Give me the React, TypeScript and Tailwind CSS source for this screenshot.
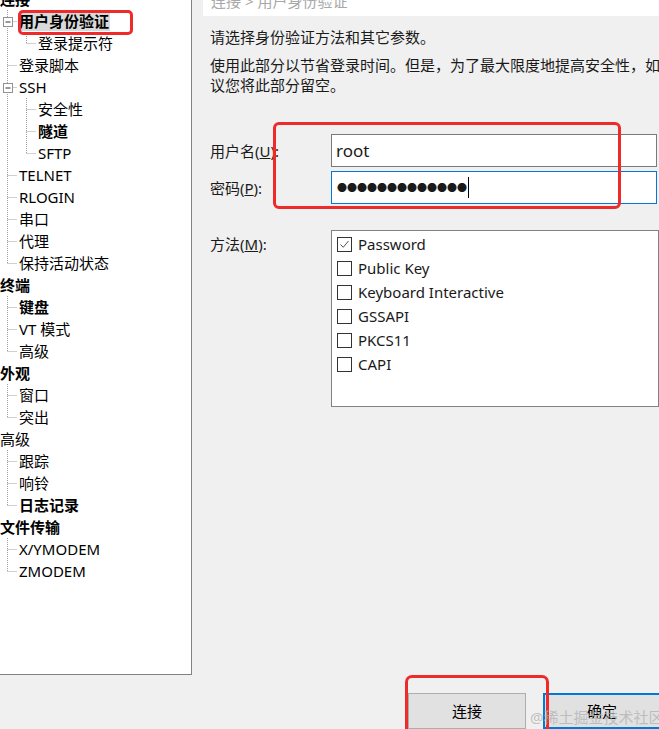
import React from 'react';

type Row = {
  label: string;
  level: 0 | 1 | 2;
  bold?: boolean;
  last?: boolean;
  box?: boolean;
  cont?: boolean;
  selected?: boolean;
};

const ROWS: Row[] = [
  { label: '连接', level: 0, bold: true },
  { label: '用户身份验证', level: 1, bold: true, box: true, selected: true },
  { label: '登录提示符', level: 2, last: true, cont: true },
  { label: '登录脚本', level: 1 },
  { label: 'SSH', level: 1, box: true },
  { label: '安全性', level: 2, cont: true },
  { label: '隧道', level: 2, bold: true, cont: true },
  { label: 'SFTP', level: 2, last: true, cont: true },
  { label: 'TELNET', level: 1 },
  { label: 'RLOGIN', level: 1 },
  { label: '串口', level: 1 },
  { label: '代理', level: 1 },
  { label: '保持活动状态', level: 1, last: true },
  { label: '终端', level: 0, bold: true },
  { label: '键盘', level: 1, bold: true },
  { label: 'VT 模式', level: 1 },
  { label: '高级', level: 1, last: true },
  { label: '外观', level: 0, bold: true },
  { label: '窗口', level: 1 },
  { label: '突出', level: 1, last: true },
  { label: '高级', level: 0 },
  { label: '跟踪', level: 1 },
  { label: '响铃', level: 1 },
  { label: '日志记录', level: 1, bold: true, last: true },
  { label: '文件传输', level: 0, bold: true },
  { label: 'X/YMODEM', level: 1 },
  { label: 'ZMODEM', level: 1, last: true },
];

const METHODS = [
  { label: 'Password', checked: true },
  { label: 'Public Key' },
  { label: 'Keyboard Interactive' },
  { label: 'GSSAPI' },
  { label: 'PKCS11' },
  { label: 'CAPI' },
];

const FONT = '[font-family:"Noto_Sans","Noto_Sans_CJK_SC",sans-serif]';

function Guides({ row }: { row: Row }) {
  if (row.level === 0) return null;
  const w = row.level * 19;
  const col = (c: number) => 7.5 + c * 19;
  const dash = { stroke: '#a0a0a0', strokeWidth: 1, strokeDasharray: '1 1' };
  const j = row.level - 1;
  const x = col(j);
  return (
    <svg width={w} height={22} className="shrink-0">
      {row.level === 2 && row.cont && <line x1={col(0)} y1={0} x2={col(0)} y2={22} {...dash} />}
      <line x1={x} y1={0} x2={x} y2={row.last ? 11 : 22} {...dash} />
      <line x1={x} y1={11.5} x2={x + 10} y2={11.5} {...dash} />
      {row.box && (
        <g>
          <rect x={x - 4} y={7.5} width={9} height={9} fill="#fff" stroke="#919191" />
          <line x1={x - 2} y1={12} x2={x + 3} y2={12} stroke="#333" />
        </g>
      )}
    </svg>
  );
}

function Tree() {
  return (
    <div className="relative h-[675px] w-[192px] shrink-0 overflow-hidden border-b border-r border-[#828282] bg-white">
      <div className="-mt-[12px]">
        {ROWS.map((r, i) => (
          <div key={i} className="flex h-[22px] items-center">
            <Guides row={r} />
            <span
              className={`whitespace-nowrap text-[15px] leading-[20px] text-black ${r.bold ? 'font-bold' : ''} ${
                r.selected ? 'bg-[#d9d9d9] pr-[1px]' : ''
              }`}
            >
              {r.label}
            </span>
          </div>
        ))}
      </div>
      <div className="pointer-events-none absolute left-[18px] top-[10px] h-[25px] w-[115px] rounded-[5px] border-[3px] border-[#ee2a2a]" />
    </div>
  );
}

function Content() {
  return (
    <div className="relative flex min-w-0 flex-1 flex-col">
      <div className="ml-[11px] h-[16px] overflow-hidden bg-white">
        <div className="-mt-[9px] pl-[8px] text-[15px] leading-[20px] whitespace-nowrap text-[#a8a8a8]">连接 &gt; 用户身份验证</div>
      </div>
      <div className="pl-[18px] pt-[11px] text-[15px] leading-[20px] text-[#1a1a1a]">
        <p className="whitespace-nowrap">请选择身份验证方法和其它参数。</p>
        <p className="mt-[8px] whitespace-nowrap">使用此部分以节省登录时间。但是，为了最大限度地提高安全性，如果您不确定，建</p>
        <p className="whitespace-nowrap">议您将此部分留空。</p>

        <div className="mt-[39px] flex items-center">
          <span className="w-[121px] shrink-0">
            用户名(<span className="underline">U</span>):
          </span>
          <div className="flex h-[33px] w-[326px] items-center border border-[#7a7a7a] bg-white pl-[4px] text-[17px]">root</div>
        </div>
        <div className="mt-[4px] flex items-center">
          <span className="w-[121px] shrink-0">
            密码(<span className="underline">P</span>):
          </span>
          <div className="flex h-[33px] w-[326px] items-center border border-[#0078d7] bg-white pl-[5px]">
            <span className="text-[10px] leading-none">●●●●●●●●●●●●●</span>
            <span className="ml-[1px] h-[21px] w-[1px] bg-black" />
          </div>
        </div>

        <div className="mt-[26px] flex items-start">
          <span className="mt-[4px] w-[121px] shrink-0">
            方法(<span className="underline">M</span>):
          </span>
          <div className="h-[177px] w-[328px] border border-[#828282] bg-white pl-[5px] pt-[1px]">
            {METHODS.map((m) => (
              <div key={m.label} className="flex h-[24px] items-center gap-[6px]">
                <span className="flex h-[15px] w-[15px] items-center justify-center border border-[#333] bg-white">
                  {m.checked && (
                    <svg width="11" height="11" viewBox="0 0 11 11">
                      <path d="M1.5 5.5 L4.2 8.3 L9.5 2" fill="none" stroke="#555" strokeWidth="1" />
                    </svg>
                  )}
                </span>
                <span className="text-[15px] whitespace-nowrap">{m.label}</span>
              </div>
            ))}
          </div>
        </div>
      </div>
      <div className="pointer-events-none absolute left-[81px] top-[122px] h-[87px] w-[348px] rounded-[6px] border-[3px] border-[#ee2a2a]" />
    </div>
  );
}

export default function App() {
  return (
    <div className={`relative h-[729px] w-[659px] overflow-hidden bg-[#f0f0f0] ${FONT}`}>
      <div className="flex">
        <Tree />
        <Content />
      </div>
      <div className="ml-[408px] mt-[18px] flex gap-[17px]">
        <button className="flex h-[36px] w-[118px] shrink-0 items-center justify-center border border-[#adadad] bg-[#e1e1e1] text-[15px] text-black">
          连接
        </button>
        <button className="flex h-[36px] w-[118px] shrink-0 items-center justify-center border-2 border-[#0078d7] bg-[#e1e1e1] text-[15px] text-black">
          确定
        </button>
      </div>
      <div className="pointer-events-none absolute left-[405px] top-[675px] h-[60px] w-[144px] rounded-[7px] border-[3px] border-[#ee2a2a]" />
      <div className="pointer-events-none absolute left-[530px] top-[706px] whitespace-nowrap text-[15px] text-[#b4b4b4]/80">@稀土掘金技术社区</div>
    </div>
  );
}
